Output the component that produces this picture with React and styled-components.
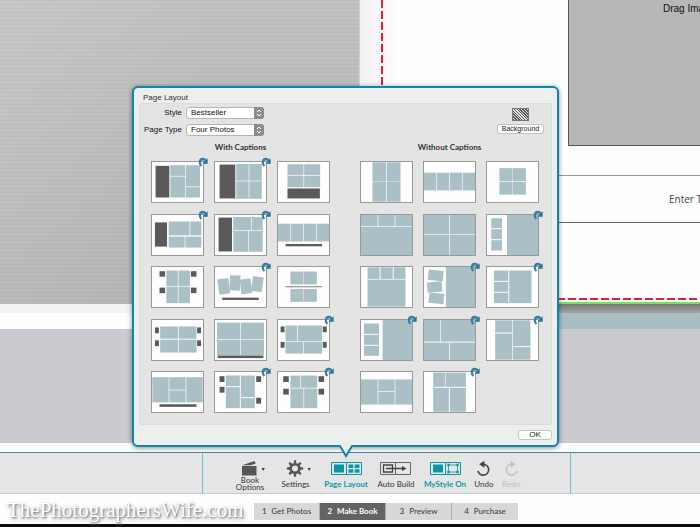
import React from 'react';
import styled, { createGlobalStyle, css } from 'styled-components';

const GlobalStyle = createGlobalStyle`
  * {
    box-sizing: border-box;
  }
  body {
    margin: 0;
    background: #fefefe;
    color: #333;
    font-family: Lato, 'Liberation Sans', sans-serif;
    font-size: 8px;
    line-height: 10px;
  }
  button,
  select {
    font: inherit;
    color: inherit;
  }
`;

const Screen = styled.div`
  display: flex;
  flex-direction: column;
  min-height: 100vh;
  overflow: hidden;
`;

/* ---------- book canvas ---------- */

const Workspace = styled.main`
  position: relative;
  flex: 1;
  display: flex;
  flex-direction: column;
  border-bottom: 9px solid #fcfcfc;
`;

const Spread = styled.div`
  display: grid;
  grid-template-columns: 360px minmax(0, 1fr);
  height: 304px;
`;

const LeftPage = styled.div`
  background: repeating-linear-gradient(
      rgba(0, 0, 0, 0.03) 0 1px,
      transparent 1px 4px
    ),
    linear-gradient(90deg, rgba(255, 255, 255, 0.1), transparent 60%),
    linear-gradient(#c1c1c1, #b3b3b2);
  border-right: 1px solid #d2d2d2;
`;

const RightPage = styled.div`
  overflow: hidden;
  padding-left: 21px;
  background: linear-gradient(90deg, #f1f1f1, #fefefe 40px);
  border-bottom: 2px solid #74e45c;
`;

const SafeArea = styled.div`
  height: 300px;
  background: repeating-linear-gradient(#e3203a 0 8px, transparent 8px 11px) 0 0 /
      2px 100% no-repeat,
    repeating-linear-gradient(90deg, #e3203a 0 8px, transparent 8px 11px) 0 100% /
      100% 2px no-repeat;
`;

const PhotoBox = styled.div`
  height: 146px;
  margin-left: 187px;
  padding: 4px 0 0 94px;
  background: #b7b7b7;
  border: 1px solid #555;
  border-top: 0;
  border-right: 0;
  color: #111;
  font-family: 'Liberation Sans', sans-serif;
  font-size: 10px;
  white-space: nowrap;
`;

const TextBox = styled.div`
  height: 48px;
  margin: 29px 0 0 150px;
  padding: 18px 0 0 138px;
  border-top: 1px solid #999;
  border-bottom: 1px solid #666;
  color: #444;
  font-family: 'Open Sans', sans-serif;
  font-size: 10px;
  white-space: nowrap;
`;

const Ledge = styled.div`
  display: grid;
  grid-template-columns: 360px 1fr;
  grid-template-rows: 9px 16px;
`;

const Strip = styled.div`
  background: ${({ fill }) => fill};
`;

const Desk = styled.div`
  flex: 1;
  min-height: 114px;
  background: #cccad0;
`;

/* ---------- page layout popover ---------- */

const Popover = styled.section`
  position: absolute;
  left: 132px;
  bottom: -4px;
  width: 427px;
  padding: 5px;
  background: #eee;
  border: 2px solid #0b86ad;
  border-radius: 6px;
  box-shadow: 0 1px 5px rgba(0, 0, 0, 0.45);
`;

const Tail = styled.svg`
  position: absolute;
  left: 203px;
  top: 100%;
  width: 18px;
  height: 13px;
`;

const Title = styled.h2`
  margin: 0 0 0 4px;
  font-family: 'Liberation Sans', sans-serif;
  font-size: 8px;
  font-weight: 400;
`;

const Panel = styled.div`
  padding: 3px 11px 11px;
  background: #e4e4e4;
  border: 1px solid #dcdcdc;
  border-radius: 2px;
`;

const Options = styled.div`
  display: flex;
  justify-content: space-between;
  font-family: 'Liberation Sans', sans-serif;
`;

const Fields = styled.div`
  display: grid;
  grid-template-columns: 31px 78px;
  grid-auto-rows: 12px;
  gap: 5px 4px;
  align-items: center;

  label {
    justify-self: end;
    color: #111;
    white-space: nowrap;
  }
`;

const SelectWrap = styled.div`
  display: grid;
  height: 12px;

  > * {
    grid-area: 1 / 1;
  }
  select {
    appearance: none;
    width: 100%;
    height: 12px;
    padding: 0 12px 0 4px;
    background: #fff;
    border: 1px solid #b5b5b5;
    border-radius: 3px;
    color: #111;
    line-height: 10px;
  }
  svg {
    justify-self: end;
    width: 10px;
    height: 12px;
    pointer-events: none;
  }
`;

const BackgroundTool = styled.div`
  display: flex;
  flex-direction: column;
  align-items: center;
  gap: 3px;
  padding-top: 1px;
  margin-right: -4px;
`;

const Hatch = styled.span`
  width: 17px;
  height: 13px;
  background: repeating-linear-gradient(45deg, #555 0 1px, #e4e4e4 1px 2px);
  border: 1px solid #777;
`;

const SmallButton = styled.button`
  width: ${({ $wide }) => ($wide ? '47px' : '34px')};
  height: 10px;
  padding: 0;
  background: #fff;
  border: 1px solid #c4c4c4;
  border-radius: 3px;
  color: #222;
  font-family: 'Liberation Sans', sans-serif;
  font-size: ${({ $wide }) => ($wide ? '7px' : '8px')};
  line-height: 8px;
`;

const Groups = styled.div`
  display: flex;
  gap: 30px;
  margin-top: 6px;
`;

const GroupTitle = styled.h3`
  margin: 0 0 9px;
  font-size: 8px;
  font-weight: 700;
  text-align: center;
`;

const ThumbGrid = styled.div`
  display: grid;
  grid-template-columns: repeat(3, 53px);
  grid-template-rows: repeat(5, 42px);
  column-gap: 10px;
  align-content: space-between;
  height: 252px;
`;

const Thumb = styled.button`
  position: relative;
  padding: 0;
  background: #fefefe;
  border: 1px solid #999;

  > svg:first-child {
    display: block;
    width: 100%;
    height: 100%;
  }
`;

const FlipBadge = styled.svg`
  position: absolute;
  top: -5px;
  right: -5px;
  width: 10px;
  height: 10px;
`;

const Actions = styled.div`
  display: flex;
  justify-content: flex-end;
  margin-top: 5px;
`;

/* ---------- bottom bars ---------- */

const Toolbar = styled.div`
  display: grid;
  grid-template-columns: 202px 369px 1fr;
  height: 42px;
  background: #e5e5e5;
  border-top: 1px solid #54839c;
  border-bottom: 1px solid #c3ced6;
`;

const Tools = styled.div`
  display: grid;
  grid-template-columns: 46px 45px 56px 44px 54px 24px 30px;
  justify-content: start;
  padding: 7px 0 0 24px;
  border: solid #6cc3d4;
  border-width: 0 1px;
`;

const Tool = styled.button`
  display: flex;
  flex-direction: column;
  align-items: center;
  gap: ${({ $tall }) => ($tall ? '0' : '4px')};
  padding: 0;
  background: none;
  border: 0;
  color: ${({ $active }) => ($active ? '#0a97a3' : '#444')};
  font-size: 8px;
  font-weight: ${({ $active }) => ($active ? 700 : 500)};
  line-height: 7px;
  white-space: nowrap;
  ${({ disabled }) =>
    disabled &&
    css`
      color: #c4c4c4;
    `}

  svg {
    width: 32px;
    height: 17px;
    flex: none;
  }
  span {
    display: block;
  }
`;

const Footer = styled.footer`
  display: grid;
  grid-template-columns: 254px auto;
  justify-content: start;
  align-items: start;
  height: 33px;
  padding-top: 9px;
  border-bottom: 3px solid #0c0c0c;
`;

const Watermark = styled.div`
  padding-left: 7px;
  margin-top: -5px;
  color: #fff;
  font-family: 'Liberation Serif', serif;
  font-size: 21px;
  line-height: 24px;
  text-shadow: 1px 1px 2px #777, 1px 2px 4px #999;
`;

const Steps = styled.nav`
  display: flex;
`;

const Step = styled.a`
  width: 66px;
  height: 17px;
  border-right: 1px solid #aaa;
  background: ${({ $current }) => ($current ? '#636363' : '#d8d8d8')};
  color: ${({ $current }) => ($current ? '#fff' : '#444')};
  font-weight: ${({ $current }) => ($current ? 700 : 500)};
  line-height: 17px;
  text-align: center;
  text-decoration: none;
  white-space: nowrap;

  span {
    margin-right: 5px;
  }
  &:last-child {
    border-right: 0;
  }
`;

// Rectangles are [x, y, w, h, angle] on a 156 x 124 page.
const withCaptions = [
  {
    flip: true,
    text: [[11, 12, 42, 98]],
    photos: [[56, 10, 46, 33], [56, 45, 46, 65], [104, 10, 43, 66], [104, 78, 43, 32]],
  },
  {
    flip: true,
    text: [[14, 8, 48, 105]],
    photos: [[65, 6, 38, 52], [105, 6, 38, 52], [65, 60, 38, 54], [105, 60, 38, 54]],
  },
  {
    text: [[29, 82, 99, 31]],
    photos: [[29, 7, 49, 34], [80, 7, 49, 34], [29, 43, 49, 35], [80, 43, 49, 35]],
  },
  {
    flip: true,
    text: [[9, 23, 37, 75]],
    photos: [[51, 20, 64, 43], [117, 20, 34, 43], [51, 67, 49, 34], [102, 67, 49, 34]],
  },
  {
    flip: true,
    text: [[11, 8, 41, 105]],
    photos: [[56, 6, 54, 41], [112, 6, 34, 41], [56, 49, 46, 65], [104, 49, 42, 65]],
  },
  {
    text: [[23, 90, 112, 7]],
    photos: [[0, 27, 38, 55], [40, 27, 37, 55], [79, 27, 37, 55], [118, 27, 38, 55]],
  },
  {
    text: [[23, 13, 17, 17], [119, 13, 17, 17], [23, 64, 17, 17], [119, 64, 17, 17]],
    photos: [[44, 11, 35, 48], [81, 11, 35, 48], [44, 61, 35, 51], [81, 61, 35, 51]],
  },
  {
    flip: true,
    text: [[22, 95, 112, 7]],
    photos: [[10, 36, 34, 48, -8], [45, 26, 32, 47, 2], [78, 37, 33, 46, -7], [113, 30, 33, 46, 8]],
  },
  {
    rule: [23, 59, 112, 4],
    photos: [[38, 14, 40, 40], [79, 14, 40, 40], [38, 68, 40, 40], [79, 68, 40, 40]],
  },
  {
    text: [[9, 23, 12, 18], [138, 23, 12, 18], [9, 63, 12, 18], [138, 63, 12, 18]],
    photos: [[25, 20, 55, 38], [82, 20, 54, 38], [25, 61, 55, 40], [82, 61, 54, 40]],
  },
  {
    text: [[8, 110, 140, 8]],
    photos: [[6, 8, 71, 51], [79, 8, 71, 51], [6, 61, 71, 48], [79, 61, 71, 48]],
  },
  {
    flip: true,
    text: [[8, 20, 12, 18], [137, 20, 12, 18], [8, 68, 12, 18], [137, 68, 12, 18]],
    photos: [[23, 17, 36, 49], [61, 17, 74, 49], [23, 68, 54, 36], [79, 68, 56, 36]],
  },
  {
    text: [[23, 100, 113, 8]],
    photos: [[1, 16, 50, 78], [105, 16, 50, 78], [53, 16, 50, 39], [53, 57, 50, 37]],
  },
  {
    flip: true,
    text: [[14, 13, 15, 18], [126, 13, 15, 18], [14, 46, 15, 18], [126, 80, 15, 18]],
    photos: [[33, 11, 43, 33], [33, 47, 43, 65], [79, 11, 43, 67], [79, 81, 43, 31]],
  },
  {
    flip: true,
    text: [[16, 13, 17, 18], [124, 13, 17, 18], [16, 52, 17, 18], [124, 52, 17, 18]],
    photos: [[38, 11, 30, 38], [70, 11, 50, 38], [38, 51, 40, 61], [80, 51, 40, 61]],
  },
];

const withoutCaptions = [
  { photos: [[35, 1, 42, 58], [79, 1, 42, 58], [35, 60, 42, 63], [79, 60, 42, 63]] },
  { photos: [[0, 33, 38, 55], [40, 33, 37, 55], [79, 33, 37, 55], [118, 33, 38, 55]] },
  { photos: [[38, 19, 40, 40], [79, 19, 40, 40], [38, 61, 40, 40], [79, 61, 40, 40]] },
  { photos: [[0, 0, 51, 35], [53, 0, 50, 35], [105, 0, 51, 35], [0, 37, 156, 87]] },
  { photos: [[0, 0, 77, 59], [79, 0, 77, 59], [0, 61, 77, 63], [79, 61, 77, 63]] },
  { flip: true, photos: [[13, 10, 33, 31], [13, 44, 33, 31], [13, 78, 33, 32], [61, 0, 95, 124]] },
  { photos: [[20, 1, 37, 36], [60, 1, 37, 36], [100, 1, 36, 36], [20, 39, 116, 84]] },
  {
    flip: true,
    photos: [[13, 10, 46, 32, 5], [10, 46, 45, 32, -5], [15, 81, 46, 32, 6], [67, 0, 89, 124]],
  },
  { flip: true, photos: [[21, 11, 44, 32], [21, 46, 44, 31], [21, 80, 44, 32], [68, 11, 68, 101]] },
  { flip: true, photos: [[9, 11, 46, 32], [9, 46, 46, 31], [9, 80, 46, 31], [66, 0, 90, 124]] },
  { flip: true, photos: [[0, 0, 50, 67], [52, 0, 104, 67], [0, 70, 77, 54], [79, 70, 77, 54]] },
  { flip: true, photos: [[25, 1, 52, 38], [25, 42, 52, 81], [79, 1, 54, 80], [79, 84, 54, 39]] },
  { photos: [[0, 23, 51, 78], [105, 23, 51, 78], [53, 23, 50, 36], [53, 61, 50, 40]] },
  { flip: true, photos: [[28, 2, 36, 44], [66, 2, 62, 44], [28, 49, 48, 74], [79, 49, 49, 74]] },
];

const Box = ({ rect, fill }) => {
  const [x, y, w, h, angle] = rect;
  return (
    <rect
      x={x}
      y={y}
      width={w}
      height={h}
      fill={fill}
      transform={angle ? `rotate(${angle} ${x + w / 2} ${y + h / 2})` : undefined}
    />
  );
};

const LayoutThumb = ({ layout, label }) => {
  const { flip, text = [], rule, photos } = layout;
  return (
    <Thumb type='button' aria-label={label}>
      <svg viewBox='0 0 156 124' preserveAspectRatio='none'>
        {photos.map((rect, i) => (
          <Box key={i} rect={rect} fill='#abc0c6' />
        ))}
        {text.map((rect, i) => (
          <Box key={i} rect={rect} fill='#5a5a5a' />
        ))}
        {rule && <Box rect={rule} fill='#999' />}
      </svg>
      {flip && (
        <FlipBadge viewBox='0 0 30 30'>
          <path
            d='M10 27C3 20 4 7 14 6c5 0 8 3 9 7'
            fill='none'
            stroke='#397fa3'
            strokeWidth='7'
          />
          <path d='M29 4v16H13z' fill='#2c749b' />
        </FlipBadge>
      )}
    </Thumb>
  );
};

const LayoutGroup = ({ title, layouts }) => (
  <div>
    <GroupTitle>{title}</GroupTitle>
    <ThumbGrid>
      {layouts.map((layout, i) => (
        <LayoutThumb key={i} layout={layout} label={`${title} ${i + 1}`} />
      ))}
    </ThumbGrid>
  </div>
);

const Dropdown = ({ id, value }) => (
  <SelectWrap>
    <select id={id} defaultValue={value}>
      <option>{value}</option>
    </select>
    <svg viewBox='0 0 10 12'>
      <path d='M0 0h7a3 3 0 0 1 3 3v6a3 3 0 0 1-3 3H0z' fill='#8b8b90' />
      <path d='M3 5l2-2 2 2M3 7l2 2 2-2' fill='none' stroke='#fff' />
    </svg>
  </SelectWrap>
);

const Caret = () => <path d='M27.500 8h3.400l-1.700 3z' fill='#444' />;

const BookIcon = () => (
  <svg viewBox='0 0 32 17'>
    <path d='M8 6h14.500v9.500H8z' fill='#555' />
    <path d='M8 5.200L20.500 1l1.300 2.500-5 1.700z' fill='#555' />
    <Caret />
  </svg>
);

const GearIcon = () => (
  <svg viewBox='0 0 32 17'>
    <circle cx='15' cy='8.500' r='4.300' fill='none' stroke='#555' strokeWidth='2.600' />
    {[0, 45, 90, 135, 180, 225, 270, 315].map((angle) => (
      <path
        key={angle}
        d='M13.600 3.500l.4-3.200h2l.4 3.200z'
        fill='#555'
        transform={`rotate(${angle} 15 8.500)`}
      />
    ))}
    <Caret />
  </svg>
);

const PageLayoutIcon = () => (
  <svg viewBox='0 0 32 17' fill='#0a97a3'>
    <path d='M1.500 2.500h30v12h-30zM16.500 2.500v12' fill='none' stroke='#0a97a3' />
    <path d='M4 4.500h10v8H4zM18.500 4.500h4.800v3.500h-4.800zM24.700 4.500h4.800v3.500h-4.800zM18.500 9.200h4.800v3.500h-4.800zM24.700 9.200h4.800v3.500h-4.800z' />
  </svg>
);

const AutoBuildIcon = () => (
  <svg viewBox='0 0 32 17' fill='none' stroke='#666'>
    <path d='M.5 2.500h30v12H.5zM15.500 2.500v12' />
    <path d='M3.500 5h9v7h-9zM6 8.500h17' stroke='#444' strokeWidth='1.300' />
    <path d='M22 6l4.500 2.500L22 11z' fill='#444' stroke='none' />
  </svg>
);

const MyStyleIcon = () => (
  <svg viewBox='0 0 32 17' fill='#0a97a3'>
    <path d='M1.500 2.500h30v12h-30zM16.500 2.500v12' fill='none' stroke='#0a97a3' />
    <path d='M19.500 5h9v7h-9z' fill='none' stroke='#0a97a3' strokeWidth='.8' />
    <path d='M4 4.500h10v8H4z' />
    <path d='M18.300 3.800h2.400v2.400h-2.400zM27.300 3.800h2.400v2.400h-2.400zM18.300 10.800h2.400v2.400h-2.400zM27.300 10.800h2.400v2.400h-2.400z' />
  </svg>
);

const TurnIcon = ({ redo }) => (
  <svg viewBox='0 0 32 17'>
    <g transform={redo ? 'translate(32 0) scale(-1 1)' : undefined}>
      <path
        d='M15 4.300a5.400 5.400 0 1 1-5 6.700'
        fill='none'
        stroke='currentColor'
        strokeWidth='1.700'
      />
      <path d='M16.500 .8v7l-5.400-3.500z' fill='currentColor' />
    </g>
  </svg>
);

const steps = ['Get Photos', 'Make Book', 'Preview', 'Purchase'];

const App = () => (
  <Screen>
    <GlobalStyle />
    <Workspace>
      <Spread>
        <LeftPage />
        <RightPage>
          <SafeArea>
            <PhotoBox>Drag Images Here</PhotoBox>
            <TextBox>Enter Text</TextBox>
          </SafeArea>
        </RightPage>
      </Spread>
      <Ledge>
        <Strip fill='#f3f3f3' />
        <Strip fill='linear-gradient(#777, #a3a3a3)' />
        <Strip fill='#fefefe' />
        <Strip fill='#a9bec4' />
      </Ledge>
      <Desk />

      <Popover aria-label='Page Layout'>
        <Title>Page Layout</Title>
        <Panel>
          <Options>
            <Fields>
              <label htmlFor='style'>Style</label>
              <Dropdown id='style' value='Bestseller' />
              <label htmlFor='page-type'>Page Type</label>
              <Dropdown id='page-type' value='Four Photos' />
            </Fields>
            <BackgroundTool>
              <Hatch />
              <SmallButton type='button' $wide>
                Background
              </SmallButton>
            </BackgroundTool>
          </Options>
          <Groups>
            <LayoutGroup title='With Captions' layouts={withCaptions} />
            <LayoutGroup title='Without Captions' layouts={withoutCaptions} />
          </Groups>
        </Panel>
        <Actions>
          <SmallButton type='button'>OK</SmallButton>
        </Actions>
        <Tail viewBox='0 0 18 13'>
          <path d='M3 0l6 10 6-10z' fill='#eee' />
          <path d='M2 1h1l6 10 6-10h1' fill='none' stroke='#0b86ad' strokeWidth='2' />
        </Tail>
      </Popover>
    </Workspace>

    <Toolbar>
      <div />
      <Tools>
        <Tool type='button' $tall>
          <BookIcon />
          <span>Book</span>
          <span>Options</span>
        </Tool>
        <Tool type='button'>
          <GearIcon />
          Settings
        </Tool>
        <Tool type='button' $active>
          <PageLayoutIcon />
          Page Layout
        </Tool>
        <Tool type='button'>
          <AutoBuildIcon />
          Auto Build
        </Tool>
        <Tool type='button' $active>
          <MyStyleIcon />
          MyStyle On
        </Tool>
        <Tool type='button'>
          <TurnIcon />
          Undo
        </Tool>
        <Tool type='button' disabled>
          <TurnIcon redo />
          Redo
        </Tool>
      </Tools>
      <div />
    </Toolbar>

    <Footer>
      <Watermark>ThePhotographersWife.com</Watermark>
      <Steps>
        {steps.map((step, i) => (
          <Step key={step} href='#' $current={step === 'Make Book'}>
            <span>{i + 1}</span>
            {step}
          </Step>
        ))}
      </Steps>
    </Footer>
  </Screen>
);

export default App;
